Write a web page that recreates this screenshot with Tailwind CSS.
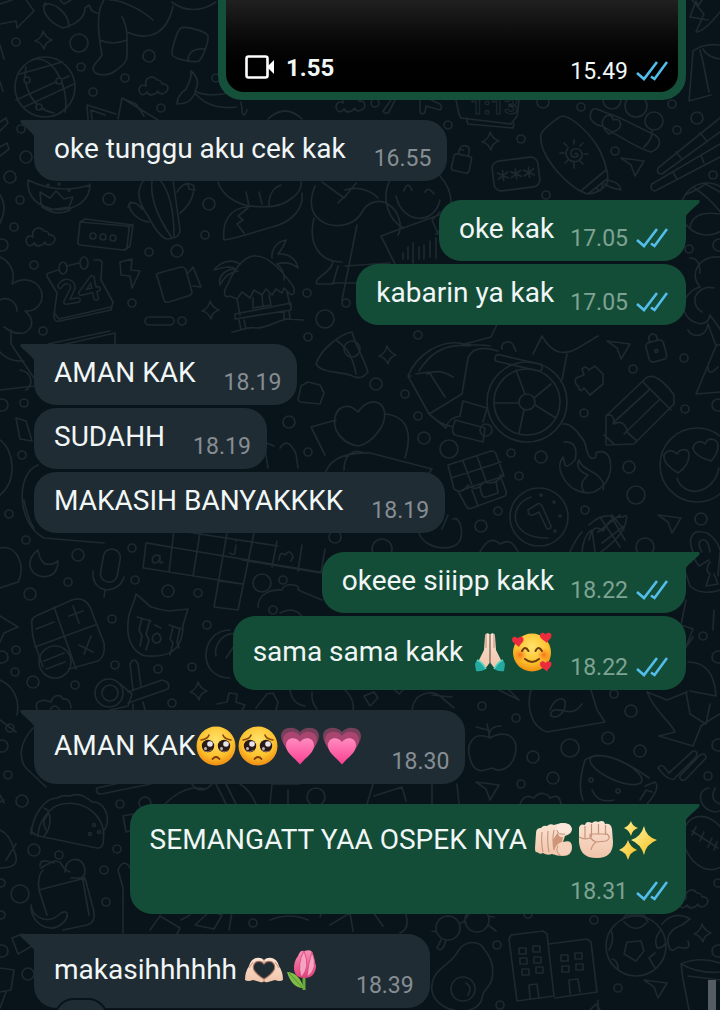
<!DOCTYPE html>
<html lang="id">
<head>
    <meta charset="UTF-8">
    <meta name="viewport" content="width=device-width, initial-scale=1.0">
    <title>Chat</title>
    <script src="https://cdn.jsdelivr.net/npm/@tailwindcss/browser@4"></script>
</head>
<body class="relative h-screen overflow-hidden bg-[#08131a] font-['Roboto',sans-serif] text-[28px] text-[#f1f6f6] antialiased">

    <!-- Wallpaper -->
    <svg class="absolute inset-0 h-full w-full" viewBox="0 0 720 1010" preserveAspectRatio="xMidYMin slice" fill="none" stroke="#1d282f" stroke-width="1.7" stroke-linecap="round" stroke-linejoin="round" aria-hidden="true">
        <defs>
            <path id="star" d="M-1-9q2 6 9 9q-7 2-8 9q-3-7-9-8q7-3 8-10z"/>
            <path id="cloud" d="M-12 8c-5-6 1-11 5-8-2-8 6-12 11-6 2 0 5 1 5 4 5-1 8 4 4 8-3 3-8 2-8-1-4 5-9 5-11 1-2 3-5 3-6 2z"/>
            <path id="plane" d="M-11-7l23 3-9 15-4-11z"/>
        </defs>
        <g id="bubbles"></g>
        <use href="#star" x="44" y="40"/><use href="#star" x="211" y="310"/><use href="#star" x="491" y="141"/>
        <use href="#star" x="388" y="355"/><use href="#star" x="199" y="691"/><use href="#star" x="703" y="933"/>
        <use href="#cloud" x="153" y="86"/><use href="#cloud" x="40" y="237"/><use href="#cloud" x="693" y="899"/><use href="#cloud" x="350" y="103"/>
        <use href="#plane" x="632" y="165"/><use href="#plane" x="618" y="348"/><use href="#plane" x="669" y="522"/><use href="#plane" x="655" y="987"/><use href="#plane" x="487" y="789"/>

        <!-- top left -->
        <path d="M0 4l12-4M0 24l16-3 1 7 17-17-10-14M0 45l4 14M0 82l3 9"/>
        <path d="M45 3c-4 6 2 19 18 25 14-4 22-10 22-20M45 5c6-5 24 7 24 22M60 0l4 4 7-4M85 8l4-3 3 6 5 2"/>
        <path d="M104 0c-9 12-5 38-2 55-4 7-8 8-9 13 0 9 16 8 22 3 9-6 13-11 12-18V34c-1-8-2-12-5-17M100 40q12 6 27 0M110 0c10 0 30 8 43 20M127 32c22 10 40 2 46-26M172 2c12 10 30 10 44 0"/>
        <path d="M181 28c-4 2-9 20-9 26 0 5 22 9 27 7 4-4 10-20 9-25-2-5-22-10-27-8zM188 61c0-9 6-13 17-12"/>
        <circle cx="45" cy="87" r="30"/>
        <path d="M20 74L62 62M16 100l53-24M24 107l50-23M32 60c20-8 38 28 33 52M26 67c-4 18 6 42 28 46"/>
        <circle cx="27" cy="80" r="3" fill="#08131a"/><circle cx="59" cy="81" r="3" fill="#08131a"/><circle cx="39" cy="107" r="3" fill="#08131a"/>
        <path d="M191 71c7 6 8 13 4 20 8 5 26 5 40 0M191 71c1 9-3 12-5 18-4 3-9 8-9 15 8 0 14-2 18-11 10 12 25 16 41 14M88 119l-1-14 29 9M92 119l-1-9 14 5M118 119l4-21 36 22M122 98l14 6 8 12"/>
        <path d="M0 122l6-4 2 5-8 8M0 147l7-4 2 6-9 7M0 195q8 12 0 28"/>
        <!-- bowl and cactus -->
        <path d="M28 180c-2 18 12 28 30 30 20-1 32-10 32-26M28 180q30 15 62 5M40 192l10 6 6-7 8 8 9-2-4 10-20 3-8-6zM42 207q15 10 28 3"/>
        <circle cx="48" cy="185" r="1"/><circle cx="59" cy="184" r="1"/><circle cx="69" cy="190" r="1"/>
        <path d="M144 180c-10 12-4 25 4 36 6 12 12 20 18 23 8 0 14-3 14-9l-5-36-2-14M152 180c-2 16 4 35 20 58M160 180c10 12 14 30 14 56M149 222c-9-1-19-8-20-18 4-3 10 0 13 5M128 207l3-5M180 213c10-8 14-17 14-27-6-5-12-2-17 6M187 183l2 5M195 190l-6-1"/>
        <path d="M80 222l47 4q3 1 2 4l-2 17q-1 3-4 3l-43-5q-3-1-2-5l2-17zM80 222l5-3 48 6-3 21-5 4M133 225l-5 2"/>
        <circle cx="93" cy="236" r="3"/><circle cx="103" cy="237" r="3"/><circle cx="113" cy="238" r="3"/>
        <!-- calendar -->
        <path d="M58 270l-9 3q-4 1-1 5l9 15-3 22q0 8 6 6l51-11 2-8-12-22 1-18q-1-3-8-2M55 314l4 5 52-12M67 266l12-3"/>
        <ellipse cx="63" cy="268" rx="4" ry="6"/><ellipse cx="84" cy="263" rx="4" ry="6"/>
        <path d="M60 286c4-8 16-4 12 4l-6 12 12-2M92 278l-11 15 17-4M92 278l4 20" stroke-width="6"/>
        <path d="M60 286c4-8 16-4 12 4l-6 12 12-2M92 278l-11 15 17-4M92 278l4 20" stroke="#08131a" stroke-width="3"/>
        <path d="M120 262l12-3-1 11 9 1-8 17-2-12-9-1zM157 276q-2-2 2-3l22-6q4 0 5 3l6 22q0 3-4 4l-19 6q-4 1-5-2zM188 273l5-6 8 20-8-1"/>
        <rect x="145" y="317" width="29" height="8" rx="4"/>
        <path d="M0 257c10 4 16 16 12 27 10-7 24-5 29 6 4 13-5 22-16 21 10 8 8 18-1 22-9 2-16-3-20-6M0 300c8-4 17 2 17 11M48 344l62-13M48 348l67-15v12M11 330v14l27 40M0 390l34-4M0 352q8 10 24 9"/>
        <!-- fox, hut, hugging figures -->
        <path d="M218 182c4 14 20 22 31 24 14 1 30 3 43-8 14-10 12-26-6-34M249 206l-3-14M262 204l-3-12M269 205c0-12 6-18 12-20M249 207c-20 0-27 16-25 33 15-2 30-8 48-13 20-5 32-18 30-34M248 208l-10 8 5 4-6 4 7 9"/>
        <path d="M230 296c-8 3-6-6-2-12 8-20 20-29 28-28 12 0 24 12 37 30 3 7 0 10-3 8l-6-6-2 5-6-4-4 6-6-6-4 6-8-5-4 8-8-6-5 7zM237 299l3 16M287 292l3 13M235 314l56-11v7l-56 9zM253 298v10l18-3-2-10M262 295l1 12M239 320l2 10M244 320l2 9M284 311v9M289 310l1 9M232 332c10-2 18-6 24-4 12 0 18-6 30-9l18 1M240 264c-8-6-20-2-26 6 10-3 16-4 22-1-10 0-18 6-16 16 4-8 10-13 18-14M272 258c-1-8 4-16 14-18-2 7-5 10-8 14 8-1 18 3 20 14-6-5-14-6-21-4 4 3 8 10 7 16"/>
        <path d="M315 186c-8 20-2 32 12 38 16 5 30-2 35-12 5-10 18-14 27-7 10 6 14 22 9 30M322 182l22 16 12-15M338 203l6-6M345 190c12-4 26 0 33 8M314 218c-6 24 4 44 28 44M357 225l-15 75M345 266l45-3M333 262c-3 13-20 15-16 22h16l5-18M332 283h28"/>
        <path d="M390 180c-10 20 0 42 14 48M440 176c18 20 12 44-4 58M396 196c6 28 38 30 44 4M404 191q3-11 8-1M425 192q3-6 9 2M381 236l58-21M381 236l14 28M440 212l-8 8 6 14M403 253v6M408 247v12M413 243v20M419 247v12M424 245v14M430 241v16M436 238v20"/>
        <!-- top right -->
        <path d="M456 100l3 14 2 4 50 6 6-8 2-16M466 118l2 6 45 4 1-5"/>
        <text x="470" y="114" font-family="Roboto" font-weight="700" font-size="24" stroke-width="1.2">1:13</text>
        <path d="M395 100l-6 12q-4 3-6-1l8-11M420 100v12q2 4 5 0l1-6 14 4q3-2 0-6l-9-4M247 110q-4 10-5 0l-1-8M268 119q17-16 34 0"/>
        <g transform="translate(462 161) rotate(12)"><rect x="-9" y="-6" width="18" height="17" rx="3"/><path d="M-5-6v-5c1-6 10-6 10 0v5M-5-11l4 0"/></g>
        <g transform="translate(516 174) rotate(-7)"><rect x="-23" y="-15" width="46" height="30" rx="7"/><path d="M-13-5V5M-18-3l10 6M-8-3l-10 6M0-5V5M-5-3L5 3M5-3L-5 3M13-5V5M8-3l10 6M18-3L8 3"/></g>
        <path d="M541 134c2-5 16-16 21-18 10 0 30 19 38 35 7 14 10 30 6 34-4 5-12 9-18 9-18-4-50-38-47-60zM582 190l24-20M588 194l19-15M597 188q4 8 6-6M607 180c10 2 13 5 14 10-6-1-12-3-16-6"/>
        <path d="M575 154c3-2 4 2 1 3-6 1-7-6-2-8 8-2 11 8 4 12-9 3-15-6-10-13M574 140v4M574 163v5M560 153h4M584 154h4M564 143l3 3M583 143l-3 3M565 163l3-3M583 164l-3-3"/>
        <path d="M592 110c-6 10 4 15 10 16 14 8 34 22 49 26 10-4 11-12 4-17-18-8-34-18-48-22-8-3-12-6-15-3zM603 120c4-8 10-4 10 0 8-3 10 6 4 10l-8 4c-6-5-8-10-6-14zM644 147q9-8 8-17"/>
        <circle cx="636" cy="106" r="11"/><circle cx="654" cy="121" r="9"/><circle cx="612" cy="100" r="9"/>
        <path d="M720 118l-62 50q-2 6 4 6l58-42M720 144l-68 40q-3 6 3 7l65-34M700 133l6 7M676 152l5 6M701 155l3 8M673 172l4 7"/>
        <path d="M690 17l6-16 2 5 4-6M690 17l18 3M692 0l12 14-8 18q8 0 24-20M693 51l-4 50 22-6M693 51q10-8 27-6M700 50l3 12 6 30M703 49q4 8 17 10"/>
        <circle cx="707" cy="209" r="26"/><path d="M685 195q14-6 22-12M690 228q2-18 30-14M694 188q20 12 38 40M720 192l-16-9"/>
        <!-- middle band -->
        <path d="M690 258c8 0 10 8 10 15M720 257c-20-2-32 16-20 30-20 6-22 30-3 36 8 2 12-2 13-8l10 14M714 288c-18-4-26 16-12 24M688 330c4 8 18 8 20-6l8 22-20 48 24-2M716 345h4M708 367q0 10 10 0"/>
        <path d="M427 374q12-6 26 3M408 376c8-20 32-38 56-32 8 2 16 0 26 2M419 371c12-20 30-28 51-25M408 376l21 38M416 374l13-2 16 25M429 414l33-20 6-36c4-10 14-12 30-7M408 376l3 0M429 414l17 14q2-10 14-12l3-15 24 7-4 14M455 420l30 8-2 14-28-7q-5-3 0-14zM461 345l30-8 8-17M429 414q10 10 24 13"/>
        <rect x="496" y="354" width="48" height="7" rx="3" transform="rotate(13 496 354)"/><path d="M502 349c-2-8 10-10 12-2l2 4M533 354l9-18c10 18 22 20 36 12l20-12M567 354l-5 26"/>
        <circle cx="527" cy="402" r="40"/><circle cx="527" cy="402" r="33"/><circle cx="527" cy="402" r="8"/><circle cx="486" cy="430" r="6"/>
        <path d="M525 394l-9-24M534 398l17-14M535 405l21 13M524 410l-5 23M519 403h-24"/>
        <path d="M576 378l8-3-2-6q4-4 7 1l6-4 8 8v10l-13 11-6-7q-4 6-6-2-4-2-2-8z"/>
        <g transform="translate(656 350) rotate(-15)"><rect x="-9" y="-9" width="18" height="20" rx="4"/><path d="M-4-9v-5q4-5 8 0v5"/><circle cy="1" r="1.5"/></g>
        <path d="M606 416l40-38q6-4 14 2 8 6 14 15v9l-40 40-28 1zM643 382l28 28M649 390l-36 33M660 399l-36 35M606 416q8-4 8 8 10-6 14 9l9 8M604 435l10 9"/>
        <path d="M564 442c10-1 14 6 11 18-4 4-8 8-10 5l-2-8q-6 8-1 18c6 14 20 20 32 17 16-8 18-22 16-32-2-8-8-10-14-7 1 6-4 7-7 3-4-6-2-14-8-19-4-7-12-14-18-13M584 492c-6-10 2-14 4-17-10-4-12-10-9-15 2 8 12 10 18 15 6 6 8 8 6 15"/>
        <circle cx="697" cy="465" r="37"/><path d="M678 473c-10-6-15-12-14-18 5-7 10-4 13-1 3-6 12-6 12 1 0 8-5 14-11 18zM711 461c-10-3-18-8-18-14 3-7 9-6 12-3 3-7 12-6 13 1 0 8-3 12-7 16zM677 478c6 20 36 18 42-10"/>
        <path d="M448 465l43-14q4 0 5 3l8 22-42 14M448 465l6 24q8 6 14-4 8 8 16-3 12 4 19-8M463 461l9 24M477 456l9 25M451 478l50-16M458 491l8 15q2 4 6 2l33-12q2-2 1-5l-6-16M472 490l6 16M480 487q2 12 6 10l12-4-2-12"/>
        <circle cx="539" cy="517" r="29"/><path d="M531 497c-24 8-22 42 17 41M528 510l8-5q4-3 6 1l9 20q0 3-4 3l-8-17-6 3q-5 1-5-5z"/><circle cx="541" cy="495" r="1"/><circle cx="554" cy="502" r="1"/><circle cx="560" cy="516" r="1"/><circle cx="555" cy="531" r="1"/>
        <path d="M589 540q4-18 14-9 8-16 20-14 6-5 2 8-4 12-24 27M589 525q10-10 22-9l14 24M600 517l20 30M612 515l12 15M598 532l22-17M602 543l22-17M582 552q2-18 10-22l3 22M570 552q6-14 12-20M480 552c8-16 16-12 20-8 8-4 12-4 18 8M419 533c6 18 40 20 42 4 2-10-2-20-8-18M448 515l-6 14M693 552c-6-14 0-22 9-20 8 0 16 10 18 18M702 552q-6-10 0-12t8 12"/>
        <!-- hat, heart, pizza -->
        <path d="M316 364c4-14 24-30 36-32 2 10 12 26 16 40-6 8-12 6-18 3-14-4-28-2-34-11zM336 340c8 6 16 12 20 34"/><circle cx="352" cy="349" r="8"/>
        <path d="M298 400l3-14 7-4 12 3 4 8-4 11-20-2zM336 430c-6-18 8-32 22-18 14-20 34-8 24 14-6 10-14 18-24 20-12-2-18-8-22-16zM336 420l-25 7 14 28M385 414c22 2 28 18 20 44M324 478q4-26 46-25l62 16-3 4M344 470c0-14 8-22 20-17M280 448q8-12 16 6l2 14M268 468l-4-26 10 4"/>
        <path d="M20 370c12 2 14 14 6 20M0 440c14 10 18 40 0 55M38 465c-22 8-22 58 6 73l60 5M24 500q4 20 10 28M16 418l10 3 6 20-12-2z"/>
        <!-- lower left -->
        <path d="M38 550c-16 12-6 30 10 26 8-1 10-10 10-15-6 5-14 4-16 0q-3-4-4-11zM0 548c18-4 26 20 18 34l-18 6M0 616l18 11-14 6-4 9M0 680c14 6 20 20 17 35"/>
        <rect x="102" y="549" width="17" height="33" rx="8" transform="rotate(10 110 565)"/><path d="M93 571c-2 24 26 24 31 6M105 590l-1 7"/>
        <path d="M146 543l180 30M144 568l50 8 49 8M146 543l-3 25M174 530l-5 42M200 533l-7 43M227 533l-13 74 24 3 16-77M219 581l23 3M277 541l-5 26M302 545l-4 26M325 549l-4 24M242 560l79 13M174 530l104 16M148 543l28 5"/>
        <path d="M160 556c-8-4-10 7-5 7q5-1 5-7v7l3-1M236 545l-1 8q-2 3-5 0M236 540v1M279 560q1-10 6-5 5-7 8 2l-2 4"/>
        <path d="M32 625q-2-7 6-10l34-15q12-4 18 7l14 36q2 13-6 18l-29 8M32 625q0 12 4 22l7 20M54 607l22 62M35 647l60-22M36 629l18-7M69 616l14-5M73 606l6 17M79 645l14 7M91 636l-7 18"/><circle cx="55" cy="662" r="16"/><path d="M44 661l20-8M46 669l19-7"/>
        <path d="M128 623c0-12 6-18 8-29l15 13q10 3 18 4l19-2-5 16c0 30-20 32-37 31-10-2-20-13-18-33zM137 617l14 4M142 618l-3 12 3 6-2 10M150 620l-4 14 3 6-3 10M169 625l12 4M173 627l-3 12 3 4-3 12M180 628l-3 14 2 6M155 625l6 3M157 633c-8 4-4 10 0 10 6-2 4-8 0-10z"/>
        <circle cx="109" cy="693" r="14"/><circle cx="110" cy="693" r="8"/><path d="M120 684l12 10-4 12-18 4M133 690l-3-26q4-8 8 0l3 22M128 692l34-12q9 2 6 9l-40 14M143 702l2 8M133 704v6M37 710c-4-12 10-10 14-8 2-8 10-8 12-3 6-1 8 5 8 9M50 710q4-8 10 0"/>
        <path d="M258 607c0-14 14-18 24-17 2-8 20-6 16 0l24 10M230 630c-30 0-34 48 0 48M240 634c-18-4-26 12-24 22M226 658l8-12M280 613q15-8 24 6"/>
        <path d="M217 704l10-2 2-9 8 1-1 8 9 3-3 5M256 708l11-14 6-1 5 9-2 8M290 690q2 14 15 16M312 692q-1 10 5 17"/>
        <path d="M33 728C20 742 18 758 26 768l20 19M0 720l16 12M0 795l4 8"/>
        <!-- taco, lunchbox -->
        <path d="M31 834c2-20 14-36 26-36 8-5 12 0 16-3 10-2 14 4 20 7 8 0 12 6 14 13 2 10-2 14-4 17 2 14-2 17-6 16l-58-12q-8-2-8-8zM38 836c0-14 12-30 24-32 22-4 40 10 42 30M44 808c8 2 8 20 0 28M48 814c-4 6-6 8-2 16"/><circle cx="94" cy="825" r="1.5"/><circle cx="90" cy="834" r="1.5"/><circle cx="99" cy="832" r="1.5"/>
        <path d="M97 788l60-13 25 8M97 788q-2 6 4 6l50-10M165 804q20-20 40-15M191 783q10 14 22 0M216 784l10 20M226 784l10 20M240 784q10 6 16 20M270 804l2-20h28M288 804v-14M123 816l10-2v16l-7 2zM0 830q10 4 14 20c6 14 0 18-14 18M0 802l4-2M6 860l10-16"/>
        <path d="M41 868l3-2 10-5 6 1q4 8 10 10M39 890l46-12 8 30q4 14-6 17l-24 5M39 890q-2-14 4-20M39 890l8 25M85 878l-2 3 6 34M85 878l-14 0M65 872c0-14 14-16 18-8 4 8 2 12-2 14M40 866q0-6 6-5l8 2M31 905c2 14 18 20 30 8 8-4 8 4 2 10-14 12-32 0-32-16M118 870c6-14 12-4 16 6l12 20 14 18M123 888v45M118 870l5 18M150 930l10-14 20 12-4 8M195 925l15-14 12 4-8 14zM232 912l-3 18"/>
        <path d="M12 938l10-4 10 12-14 8zM0 968l14 2-3 20-11 2M6 992l-6 16"/>
        <!-- lower right -->
        <path d="M720 552l-2 24M709 560l-10 6-8-12M692 562l-10 0 8 24q10 10 30 4M710 562q-6 8 0 12l-4 12 12-2-4-10"/>
        <path d="M686 600l-5 25 12 4-8 20 8-12M714 610l-1 20M688 662q26 0 28 34l-26-5M647 692l20 8 20-8M647 692c8 20 24 30 28 40l-16 4 34 10 8-20q8-6 19-12M686 692l4 22 16 10 4-20"/>
        <path d="M531 690c-4 14-2 36 16 42l58-10-8-12-6-20M550 710c4-14 20-16 14 0-6 12-20 6-10 0 10-2 18 8 28-6M499 690l20 10-10-10M364 696l10-4 4 6-8 8zM395 690l4 4 4-4M345 690q10 10 8 20M412 710c2-18 20-20 28-14l14 12M432 695l20 2"/>
        <path d="M490 738c-18-8-24 8-20 20 4 18 16 12 22 10 10 6 24-2 24-22-2-14-16-14-26-8zM490 738l-3-14M476 727l12 3M489 736q0-10 12-10"/>
        <ellipse cx="616" cy="770" rx="28" ry="10" transform="rotate(24 616 770)"/><path d="M585 760q-8 26-2 40M585 760q20-14 64 18M645 786l10-4q6 6-8 22M640 800l6-10 6 2M592 790q6 14 22 10"/><circle cx="591" cy="780" r="2"/><circle cx="618" cy="791" r="2"/>
        <path d="M658 768q3-5 7 0l4 5 24-22q6 0 3 6l-22 22q-6 2-16-11zM680 776l20-21q6-3 6 3l-21 22q-6 1-5-4M709 788c-14 2-10 22 6 24l5-1M715 788q-6 12 5 16M520 804c4-10 10-8 14-6 6-8 14-4 16 0 8-4 10 0 11 6M373 784l-6 20M374 796l28-9 4 14M432 784v20M457 784l2 20"/>
        <ellipse cx="706" cy="843" rx="21" ry="28" transform="rotate(-28 706 843)"/><path d="M692 831l26 17M696 827l-4 8M704 832l-4 9M712 838l-4 9M717 842l-3 8"/>
        <circle cx="448" cy="928" r="12"/><circle cx="477" cy="920" r="12"/><path d="M436 932l-4-1M441 940l-4 8q4 4 7-2l2-6M460 924q4-4 6-1M488 925l8 6M488 916l6 1"/>
        <path d="M432 985c2-18 20-20 26-34 8-12 22-10 26-2 8 10 10 18 8 30-2 10-10 10-10 20-4 12-20 14-28 11-12-2-24-12-22-25z"/><circle cx="463" cy="989" r="12"/><path d="M466 983q7 4 2 12"/>
        <path d="M517 1001l-8-62 2-4 32-4 4 3 7 62zM549 944l38-5 4 3 6 50-42 6M530 999l-1-14 8-1 2 14M570 994l-1-14 9-1 2 13"/>
        <path d="M519 948h7v6h-7zM533 946h7v6h-7zM520 958h7v6h-7zM534 957h7v6h-7zM522 969h7v6h-7zM536 967h7v6h-7zM561 955h7v6h-7zM575 953h7v6h-7zM562 966h7v6h-7zM576 964h7v6h-7z"/>
        <circle cx="636" cy="946" r="30"/><path d="M627 942l14-1 3 10-8 10-12-7zM624 922q12 12 22 1M611 930q4 10-2 20M661 930q-8 8-4 18 6 0 8-4M618 969q0-9-6-10M655 968l-6-10 6-5M622 920l4-5h18l4 7"/>
        <path d="M662 924q12-14 28-5l-8 6q-16 6-14 18t10 4q14 4 10-6M681 964q18-8 39-1M681 964l2 15 6 31M681 964q18 10 39 8M688 976l32 4M590 1010l6-6 4 6M598 1000v10M322 912l-2 5M190 915l-9 5M470 912l-4 6"/>
        <path d="M270 920q20-8 38 0M330 925l20-12 3 18M373 912l10 14M405 912q6 16-5 21"/>
    </svg>

    <!-- Shared shapes -->
    <svg class="absolute h-0 w-0" aria-hidden="true">
        <defs>
            <radialGradient id="face" cx=".5" cy=".35" r=".65"><stop offset="0" stop-color="#ffe36b"/><stop offset=".65" stop-color="#fcc12d"/><stop offset="1" stop-color="#ef8d12"/></radialGradient>
            <radialGradient id="cheek"><stop offset="0" stop-color="#f9701f"/><stop offset="1" stop-color="#f9901f" stop-opacity="0"/></radialGradient>
            <linearGradient id="pink" x2="0" y2="1"><stop offset="0" stop-color="#ff8cc0"/><stop offset="1" stop-color="#fb3f92"/></linearGradient>
            <linearGradient id="skin" x2="0" y2="1"><stop offset="0" stop-color="#fbe3d3"/><stop offset="1" stop-color="#f0c4aa"/></linearGradient>
            <linearGradient id="petal" x2="0" y2="1"><stop offset="0" stop-color="#f892b6"/><stop offset="1" stop-color="#df3f78"/></linearGradient>
            <linearGradient id="gold" x2="1" y2="1"><stop offset="0" stop-color="#fff5a0"/><stop offset="1" stop-color="#f5bd1d"/></linearGradient>
            <symbol id="ticks" viewBox="0 0 32 24">
                <path d="M1 13l7 6L21 2M15 16.500l3.500 2.500L31 2" fill="none" stroke="#53bdeb" stroke-width="2.600"/>
            </symbol>
            <symbol id="tail-in" viewBox="0 0 15 18"><path d="M2 0h13v18C14 14 5 7 1 3Q-1 0 2 0z"/></symbol>
            <symbol id="tail-out" viewBox="0 0 15 18"><path d="M13 0H0v18C1 14 10 7 14 3Q16 0 13 0z"/></symbol>
            <symbol id="pleading" viewBox="0 0 40 40">
                <circle cx="20" cy="20" r="19.500" fill="url(#face)"/>
                <path d="M5 14q7-1 8-5M35 14q-7-1-8-5" fill="none" stroke="#8a4a14" stroke-width="1.600" stroke-linecap="round"/>
                <circle cx="12" cy="20" r="6.200" fill="#2a1a18"/><circle cx="28" cy="20" r="6.200" fill="#2a1a18"/>
                <circle cx="14" cy="18" r="2.800" fill="#e4e4ea"/><circle cx="30" cy="18" r="2.800" fill="#e4e4ea"/>
                <circle cx="9.500" cy="22.500" r="1.500" fill="#bbb"/><circle cx="25.500" cy="22.500" r="1.500" fill="#bbb"/>
                <path d="M8 25q4 2 8-1M24 24q4 3 8 1" fill="none" stroke="#8c6b60" stroke-width="1"/>
                <path d="M16.500 33q3.500-4 7 0" fill="none" stroke="#7a3a12" stroke-width="1.800" stroke-linecap="round"/>
            </symbol>
            <symbol id="heart" viewBox="0 0 40 40">
                <path d="M20 31C10 24 1 19 1 10 1 1 14-1 20 6c6-7 19-5 19 4 0 9-9 14-19 21z" fill="#76405a"/>
                <path d="M20 35C11 27 3 22 3 14 3 5 15 3 20 10c5-7 17-5 17 4 0 8-8 13-17 21z" fill="#a9456f"/>
                <path d="M20 38.500C14 31 6 27 6 19.500 6 11 16 10 20 16c4-6 14-5 14 3.500C34 27 26 31 20 38.500z" fill="url(#pink)"/>
            </symbol>
            <symbol id="pray" viewBox="0 0 40 40">
                <path d="M19.500 2q-4-2-4.500 2l-1 14-6 12 7 7 4.500-6zM20.500 2q4-2 4.500 2l1 14 6 12-7 7-4.500-6z" fill="url(#skin)"/>
                <path d="M20 2v28M16 2v14M24 2v14" stroke="#c48c75" stroke-width="1" fill="none"/>
                <path d="M7 28q5 2 9 9-5 3-10 2l-1-7zM33 28q-5 2-9 9 5 3 10 2l1-7z" fill="#23aaa0"/><path d="M7 28q5 2 9 9M33 28q-5 2-9 9" stroke="#54d3c5" stroke-width="1.500" fill="none"/>
            </symbol>
            <symbol id="love" viewBox="0 0 40 40">
                <circle cx="20" cy="20.500" r="19" fill="url(#face)"/><circle cx="8" cy="23" r="7" fill="url(#cheek)"/><circle cx="32" cy="23" r="7" fill="url(#cheek)"/>
                <path d="M10 19q3-6 6.500 0M23.500 19q3-6 6.500 0M13 27q7 6 14 0" fill="none" stroke="#6b3b12" stroke-width="2" stroke-linecap="round"/>
                <path id="mini" d="M7 15C4 12 0 11 0 7.500 0 4 4 4 5.500 6.500 7 4 12 4 11.500 8 11 11 8 12 7 15z" fill="#ea2c3d"/>
                <use href="#mini" x="28" y="-4"/><use href="#mini" x="28" y="24.500"/>
            </symbol>
            <symbol id="point" viewBox="0 0 40 40">
                <path d="M2 13q0-5 5-5 2-3 6-2 3-3 7-1l7-2q10 0 11 6 0 5-7 7l-2 6q9-3 9 5 0 9-9 9-6 0-11-2-5 2-9-1-3 2-6-1Q1 33 1 28z" fill="url(#skin)"/>
                <path d="M8 12q-1 12 1 20M14 11q-1 12 1 21M20 10q-2 9 0 20" fill="none" stroke="#c79479" stroke-width="1.100"/>
                <path d="M24 12q0 6 5 5l-1 5q-5 1-8 8l-1-10z" fill="#cf9579"/>
                <ellipse cx="30" cy="8.500" rx="7.500" ry="5.500" fill="#fce8db"/><path d="M23 10q1 5 8 4" fill="none" stroke="#c79479"/>
                <ellipse cx="30" cy="28.500" rx="7.500" ry="6.500" fill="#f6d1bb"/><path d="M24 26q-3 5 2 9" fill="none" stroke="#c79479"/>
            </symbol>
            <symbol id="fist" viewBox="0 0 40 40">
                <path d="M3 8q1-5 6-3 1-5 7-2 3-3 6-1 6-3 7 2 6-1 7 5l1 13q0 16-16 16C8 38 4 32 3 22z" fill="url(#skin)"/>
                <path d="M9 6v12M15.500 4v13M22.500 4v10M29.500 5v10M3 17q5 3 12 1M14 14h17q5 4-1 7l-10 1q-4 3-5 8M14 14q-1 5 6 8" fill="none" stroke="#c79479" stroke-width="1.200"/>
            </symbol>
            <symbol id="sparkles" viewBox="0 0 40 40">
                <path d="M26 6q2 11 13 14-11 4-13 15-3-11-13-15 10-3 13-14z" fill="url(#gold)"/><path d="M13 1q1 5 7 7-6 2-7 8-2-6-7-8 5-2 7-7zM10 20q2 7 9 10-7 2-9 10-2-8-9-10 7-3 9-10z" fill="url(#gold)"/>
            </symbol>
            <symbol id="heart-hands" viewBox="0 0 40 40">
                <path d="M1 30q0-8 4-14 2-7 7-8 5-1 8 2 3-3 8-2 5 1 7 8 4 6 4 14-3 2-8 0l-7 2q-3 1-4-1-1 2-4 1l-7-2q-5 2-8 0z" fill="url(#skin)"/>
                <path d="M20 14q-3-4-8-2-4 3-2 8 3 5 10 9 7-4 10-9 2-5-2-8-5-2-8 2z" fill="#202c33" stroke="#a8705c" stroke-width="1.200"/>
                <path d="M20 29v3M20 10v4M5 18l4-6M35 18l-4-6" stroke="#c79479" fill="none"/>
            </symbol>
            <symbol id="tulip" viewBox="0 0 40 40">
                <path d="M18 25v15" stroke="#69a83b" stroke-width="3"/><path d="M17 38Q6 38 1 22q11 0 16 14z" fill="#80bd46"/><path d="M3 23l13 14" stroke="#4f8f31"/>
                <path d="M12 6q2-6 6-5 7-2 8 1l4 14q-1 12-11 12Q8 28 8 18q0-7 4-12z" fill="url(#petal)"/><path d="M18 1q-7 12-3 26 10-9 3-26zM26 2q-4 12-5 25 12-8 5-25z" fill="#f7a2c0" stroke="#d5447c" stroke-width=".8"/>
            </symbol>
        </defs>
    </svg>

    <!-- Messages -->
    <main class="relative flex flex-col items-start px-[34px] leading-9">

        <!-- Video -->
        <div class="flex h-[100px] w-[468px] max-w-full self-end rounded-b-[24px] bg-[#15503a] px-2 pb-2">
            <div class="flex w-full items-end justify-between rounded-b-[18px] bg-linear-to-b from-[#202020] to-black pr-2.5 pb-1.5 pl-[18px]">
                <div class="flex items-center gap-2.5 pb-1 text-[24px] leading-7 font-bold">
                    <svg class="h-7 w-8" viewBox="0 0 32 28" aria-hidden="true"><rect x="2.500" y="2.500" width="21" height="21" rx="2" fill="none" stroke="#fff" stroke-width="2.600"/><path d="M24 12l6-6v14l-6-6z" fill="#fff"/></svg>
                    <span>1.55</span>
                </div>
                <div class="flex items-center gap-2 text-[23px] leading-7"><time>15.49</time><svg class="h-6 w-8" role="img" aria-label="Dibaca"><use href="#ticks"/></svg></div>
            </div>
        </div>

        <div class="relative mt-5 flex items-end gap-7 rounded-[22px] rounded-tl-none bg-[#202c33] pt-[11px] pr-4 pb-2 pl-5">
            <svg class="absolute top-0 -left-3.5 h-[18px] w-[15px] fill-[#202c33]" aria-hidden="true"><use href="#tail-in"/></svg>
            <p class="pb-1.5">oke tunggu aku cek kak</p>
            <time class="text-[23px] leading-7 text-[#868e93]">16.55</time>
        </div>

        <div class="relative mt-[19px] flex items-end gap-4 self-end rounded-[22px] rounded-tr-none bg-[#144d37] pt-[11px] pr-[18px] pb-2 pl-5">
            <svg class="absolute top-0 -right-3.5 h-[18px] w-[15px] fill-[#144d37]" aria-hidden="true"><use href="#tail-out"/></svg>
            <p class="pb-1.5">oke kak</p>
            <div class="flex items-center gap-2 text-[23px] leading-7 text-[#7fa393]"><time>17.05</time><svg class="h-6 w-8" role="img" aria-label="Dibaca"><use href="#ticks"/></svg></div>
        </div>

        <div class="mt-[3px] flex items-end gap-4 self-end rounded-[22px] bg-[#144d37] pt-[11px] pr-[18px] pb-2 pl-5">
            <p class="pb-1.5">kabarin ya kak</p>
            <div class="flex items-center gap-2 text-[23px] leading-7 text-[#7fa393]"><time>17.05</time><svg class="h-6 w-8" role="img" aria-label="Dibaca"><use href="#ticks"/></svg></div>
        </div>

        <div class="relative mt-[19px] flex items-end gap-7 rounded-[22px] rounded-tl-none bg-[#202c33] pt-[11px] pr-4 pb-2 pl-5">
            <svg class="absolute top-0 -left-3.5 h-[18px] w-[15px] fill-[#202c33]" aria-hidden="true"><use href="#tail-in"/></svg>
            <p class="pb-1.5">AMAN KAK</p>
            <time class="text-[23px] leading-7 text-[#868e93]">18.19</time>
        </div>

        <div class="mt-[3px] flex items-end gap-7 rounded-[22px] bg-[#202c33] pt-[11px] pr-4 pb-2 pl-5">
            <p class="pb-1.5">SUDAHH</p>
            <time class="text-[23px] leading-7 text-[#868e93]">18.19</time>
        </div>

        <div class="mt-[3px] flex items-end gap-7 rounded-[22px] bg-[#202c33] pt-[11px] pr-4 pb-2 pl-5">
            <p class="pb-1.5">MAKASIH BANYAKKKK</p>
            <time class="text-[23px] leading-7 text-[#868e93]">18.19</time>
        </div>

        <div class="relative mt-[19px] flex items-end gap-4 self-end rounded-[22px] rounded-tr-none bg-[#144d37] pt-[11px] pr-[18px] pb-2 pl-5">
            <svg class="absolute top-0 -right-3.5 h-[18px] w-[15px] fill-[#144d37]" aria-hidden="true"><use href="#tail-out"/></svg>
            <p class="pb-1.5">okeee siiipp kakk</p>
            <div class="flex items-center gap-2 text-[23px] leading-7 text-[#7fa393]"><time>18.22</time><svg class="h-6 w-8" role="img" aria-label="Dibaca"><use href="#ticks"/></svg></div>
        </div>

        <div class="mt-[3px] flex items-end gap-4 self-end rounded-[22px] bg-[#144d37] pt-3 pr-[18px] pb-2 pl-5">
            <p class="pb-1.5 leading-12">sama sama kakk <svg class="mr-0.5 mb-1 inline-block size-10" role="img" aria-label="Tangan berdoa"><use href="#pray"/></svg><svg class="mr-0.5 mb-1 inline-block size-10" role="img" aria-label="Wajah penuh cinta"><use href="#love"/></svg></p>
            <div class="flex items-center gap-2 text-[23px] leading-7 text-[#7fa393]"><time>18.22</time><svg class="h-6 w-8" role="img" aria-label="Dibaca"><use href="#ticks"/></svg></div>
        </div>

        <div class="relative mt-5 flex items-end gap-7 rounded-[22px] rounded-tl-none bg-[#202c33] pt-3 pr-4 pb-2 pl-5">
            <svg class="absolute top-0 -left-3.5 h-[18px] w-[15px] fill-[#202c33]" aria-hidden="true"><use href="#tail-in"/></svg>
            <p class="pb-1.5 leading-12">AMAN KAK<svg class="mr-0.5 mb-1 inline-block size-10" role="img" aria-label="Wajah memohon"><use href="#pleading"/></svg><svg class="mr-0.5 mb-1 inline-block size-10" role="img" aria-label="Wajah memohon"><use href="#pleading"/></svg><svg class="mr-0.5 mb-1 inline-block size-10" role="img" aria-label="Hati membesar"><use href="#heart"/></svg><svg class="mr-0.5 mb-1 inline-block size-10" role="img" aria-label="Hati membesar"><use href="#heart"/></svg></p>
            <time class="text-[23px] leading-7 text-[#868e93]">18.30</time>
        </div>

        <div class="relative mt-5 flex flex-col items-end gap-3.5 self-end rounded-[22px] rounded-tr-none bg-[#144d37] pt-3 pr-[18px] pb-2 pl-5">
            <svg class="absolute top-0 -right-3.5 h-[18px] w-[15px] fill-[#144d37]" aria-hidden="true"><use href="#tail-out"/></svg>
            <p class="pr-2 leading-12">SEMANGATT YAA OSPEK NYA <svg class="mr-0.5 mb-1 inline-block size-10" role="img" aria-label="Menunjuk kamu"><use href="#point"/></svg><svg class="mr-0.5 mb-1 inline-block size-10" role="img" aria-label="Kepalan tangan"><use href="#fist"/></svg><svg class="mr-0.5 mb-1 inline-block size-10" role="img" aria-label="Kilauan"><use href="#sparkles"/></svg></p>
            <div class="flex items-center gap-2 text-[23px] leading-7 text-[#7fa393]"><time>18.31</time><svg class="h-6 w-8" role="img" aria-label="Dibaca"><use href="#ticks"/></svg></div>
        </div>

        <div class="relative mt-5 flex items-end gap-7 rounded-[22px] rounded-tl-none bg-[#202c33] pt-3 pr-4 pb-2 pl-5">
            <svg class="absolute top-0 -left-3.5 h-[18px] w-[15px] fill-[#202c33]" aria-hidden="true"><use href="#tail-in"/></svg>
            <p class="pb-1.5 leading-12">makasihhhhhh <svg class="mr-0.5 mb-1 inline-block size-10" role="img" aria-label="Tangan hati"><use href="#heart-hands"/></svg><svg class="mr-0.5 mb-1 inline-block size-10" role="img" aria-label="Tulip"><use href="#tulip"/></svg></p>
            <time class="text-[23px] leading-7 text-[#868e93]">18.39</time>
            <!-- Reaction badge -->
            <span class="absolute top-16 left-5 h-10 w-[54px] rounded-full border-2 border-[#08131a] bg-[#202c33]"></span>
        </div>
    </main>

    <!-- Scroll thumb -->
    <div class="absolute right-1 bottom-0 h-[30px] w-2 bg-[#555d62]"></div>

    <script>
        // x, y, radius of the small rings on the wallpaper
        const rings = [
            [16,42,4],[79,43,9],[149,56,6],[81,67,4],[125,78,4],[93,92,4],[161,108,4],[216,78,4],[21,129,4],[26,157,6],[10,177,6],[20,200,4],
            [109,199,6],[209,204,6],[14,227,4],[149,252,4],[177,251,6],[205,235,4],[34,265,4],[132,303,4],[182,321,4],[43,331,4],[2,245,6],
            [307,293,4],[346,303,4],[325,319,9],[308,337,4],[418,335,4],[448,125,4],[375,103,4],[521,139,4],[543,102,6],[581,107,4],[697,118,6],
            [677,130,4],[672,104,4],[615,151,4],[546,195,4],[713,175,4],[689,249,4],[719,245,6],[2,405,6],[24,403,4],[289,422,6],
            [308,452,4],[22,455,4],[9,514,4],[26,540,4],[335,537,6],[376,384,6],[405,394,4],[418,416,4],[424,438,6],[449,449,9],[511,453,4],
            [541,457,6],[519,476,4],[584,413,4],[633,369,4],[684,358,4],[685,409,4],[718,405,6],[629,467,6],[636,495,9],[498,511,4],
            [481,526,6],[585,510,4],[701,519,6],[645,547,9],[382,549,10],[78,555,6],[132,548,4],[135,580,4],[68,582,4],[30,594,6],[168,591,6],
            [198,593,4],[262,583,9],[283,580,4],[112,619,4],[207,625,4],[273,610,4],[16,650,4],[2,657,6],[15,672,4],[33,682,6],[75,685,4],
            [115,665,4],[158,669,4],[192,667,4],[172,703,4],[10,728,4],[2,746,6],[8,775,4],[22,801,6],[34,850,6],[120,804,4],[145,803,6],
            [117,849,4],[59,855,4],[104,870,4],[20,894,9],[1,883,4],[1,915,4],[106,902,4],[253,923,4],[316,797,9],[28,974,6],[2,951,6],
            [703,636,4],[718,657,6],[614,694,4],[631,711,6],[482,706,4],[516,718,4],[608,738,6],[640,751,6],[570,748,9],[533,757,6],
            [553,778,6],[521,784,4],[708,776,4],[718,745,6],[528,914,4],[594,920,4],[718,883,4],[497,945,4],[618,988,4],[500,1005,4],[718,951,6]
        ];
        const layer = document.getElementById('bubbles');
        rings.forEach(([x, y, r]) => {
            const ring = document.createElementNS('http://www.w3.org/2000/svg', 'circle');
            ring.setAttribute('cx', x);
            ring.setAttribute('cy', y);
            ring.setAttribute('r', r);
            layer.appendChild(ring);
        });
    </script>
</body>
</html>
